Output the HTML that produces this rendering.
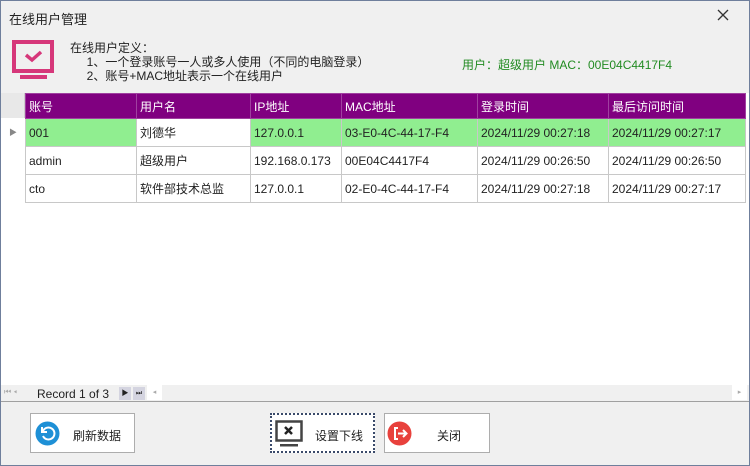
<!DOCTYPE html><html><head><meta charset="utf-8"><style>
*{margin:0;padding:0;box-sizing:border-box}
body{width:750px;height:466px;background:#f0f0f0;font-family:"Liberation Sans","Noto Sans CJK SC",sans-serif;font-size:12px;color:#222;position:relative;overflow:hidden}
.win{position:absolute;left:0;top:0;width:750px;height:466px;border:1px solid #6f7f9c}
.abs{position:absolute}
table{border-collapse:collapse;position:absolute;left:25px;top:93px;table-layout:fixed}
td,th{height:28px;padding-left:3px;text-align:left;font-weight:normal;white-space:nowrap;overflow:hidden;border:1px solid #c8c8c8}
th{height:25px;background:#800080;color:#fff;border-color:#a040a0}
tr.g td{background:#90ee90}
td{background:#fff}
.btn{position:absolute;top:413px;height:40px;background:#fff;border:1px solid #adadad;font-size:12px}
</style></head><body><div class="win"></div>
<div class="abs" style="left:9px;top:9px;font-size:13px">在线用户管理</div>
<svg class="abs" style="left:717px;top:9px" width="12" height="12"><path d="M1 1l10 10M11 1L1 11" stroke="#333" stroke-width="1.3"/></svg>
<svg class="abs" style="left:12px;top:40px" width="44" height="40"><rect x="2" y="2" width="38" height="29" fill="none" stroke="#d6377a" stroke-width="4"/><path d="M14 15l6 5 9-8" fill="none" stroke="#d6377a" stroke-width="3.5"/><rect x="8" y="35" width="27" height="4" fill="#d6377a"/></svg>
<div class="abs" style="left:70px;top:41px;line-height:14px">在线用户定义：<br>&nbsp;&nbsp;&nbsp;&nbsp;&nbsp;1、一个登录账号一人或多人使用（不同的电脑登录）<br>&nbsp;&nbsp;&nbsp;&nbsp;&nbsp;2、账号+MAC地址表示一个在线用户</div>
<div class="abs" style="left:462px;top:56px;color:#228b22">用户：超级用户 MAC：00E04C4417F4</div>
<div class="abs" style="left:1px;top:93px;width:748px;height:292px;background:#fff"></div>
<div class="abs" style="left:1px;top:93px;width:24px;height:25px;background:#e8e8e8;border-right:1px solid #ccc"></div>
<div class="abs" style="left:9px;top:127px;font-size:8px;color:#888">▶</div>
<table><colgroup><col style="width:111px"><col style="width:114px"><col style="width:91px"><col style="width:136px"><col style="width:131px"><col style="width:137px"></colgroup>
<tr><th>账号</th><th>用户名</th><th>IP地址</th><th>MAC地址</th><th>登录时间</th><th>最后访问时间</th></tr>
<tr class="g"><td>001</td><td style="background:#fff">刘德华</td><td>127.0.0.1</td><td>03-E0-4C-44-17-F4</td><td>2024/11/29 00:27:18</td><td>2024/11/29 00:27:17</td></tr>
<tr><td>admin</td><td>超级用户</td><td>192.168.0.173</td><td>00E04C4417F4</td><td>2024/11/29 00:26:50</td><td>2024/11/29 00:26:50</td></tr>
<tr><td>cto</td><td>软件部技术总监</td><td>127.0.0.1</td><td>02-E0-4C-44-17-F4</td><td>2024/11/29 00:27:18</td><td>2024/11/29 00:27:17</td></tr></table>
<div class="abs" style="left:1px;top:385px;width:748px;height:17px;background:#f0f0f0;border-bottom:1px solid #a0a0a0"></div>
<div class="abs" style="left:4px;top:387px;font-size:8px;color:#aaa">⏮ ◂</div>
<div class="abs" style="left:37px;top:387px">Record 1 of 3</div>
<div class="abs" style="left:119px;top:387px;width:12px;height:13px;background:#d4d4e0;font-size:7px;text-align:center;line-height:13px">▶</div>
<div class="abs" style="left:133px;top:387px;width:12px;height:13px;background:#d4d4e0;font-size:7px;text-align:center;line-height:13px">⏭</div>
<div class="abs" style="left:147px;top:385px;width:15px;height:15px;background:#fff;font-size:7px;color:#aaa;text-align:center;line-height:15px">◂</div>
<div class="abs" style="left:732px;top:385px;width:15px;height:15px;background:#fff;font-size:7px;color:#aaa;text-align:center;line-height:15px">▸</div>
<div class="btn" style="left:30px;width:105px"><svg class="abs" style="left:4px;top:7px" width="25" height="25"><circle cx="12.5" cy="12.5" r="12" fill="#1e90d6"/><path d="M8 10a6 6 0 1 1 0 5" fill="none" stroke="#fff" stroke-width="2"/><path d="M7 6v5h5" fill="none" stroke="#fff" stroke-width="2"/></svg><span class="abs" style="left:42px;top:13px">刷新数据</span></div>
<div class="btn" style="left:270px;width:105px;border:2px dotted #3a4a6a"><svg class="abs" style="left:3px;top:5px" width="30" height="28"><rect x="1.5" y="1.5" width="25" height="19" fill="none" stroke="#444" stroke-width="2.5"/><path d="M10 7l7 7M17 7l-7 7" stroke="#222" stroke-width="2.5"/><rect x="5" y="24" width="18" height="2.5" fill="#444"/></svg><span class="abs" style="left:43px;top:12px">设置下线</span></div>
<div class="btn" style="left:384px;width:106px"><svg class="abs" style="left:2px;top:7px" width="25" height="25"><circle cx="12.5" cy="12.5" r="12" fill="#e8413c"/><path d="M11 7H8v11h3" fill="none" stroke="#fff" stroke-width="2"/><path d="M11 12.5h8M16 9l3.5 3.5L16 16" fill="none" stroke="#fff" stroke-width="2"/></svg><span class="abs" style="left:52px;top:13px">关闭</span></div>
</body></html>
